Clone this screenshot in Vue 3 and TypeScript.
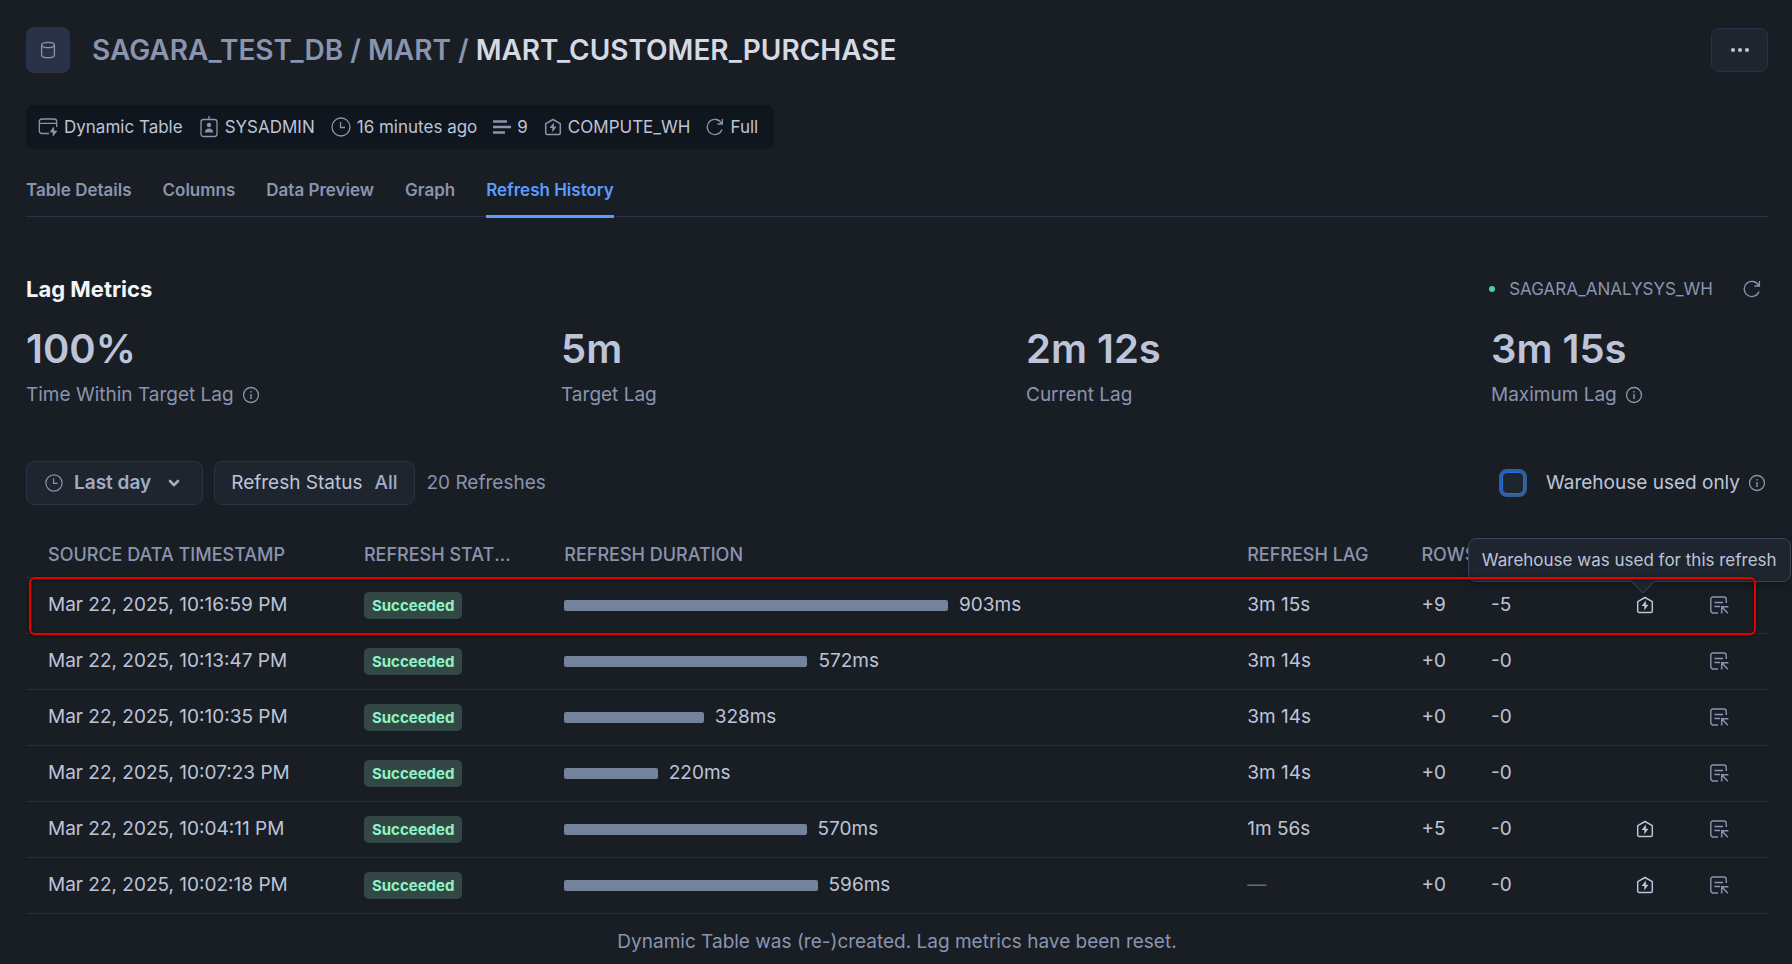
<script setup lang="ts">
interface Refresh {
  time: string
  ms: number
  lag: string | null
  added: number
  removed: number
  warehouse: boolean
}

const tabs: string[] = ['Table Details', 'Columns', 'Data Preview', 'Graph', 'Refresh History']
const activeTab = 'Refresh History'

const metrics: { value: string; label: string; info: boolean }[] = [
  { value: '100%', label: 'Time Within Target Lag', info: true },
  { value: '5m', label: 'Target Lag', info: false },
  { value: '2m 12s', label: 'Current Lag', info: false },
  { value: '3m 15s', label: 'Maximum Lag', info: true },
]

const refreshes: Refresh[] = [
  { time: 'Mar 22, 2025, 10:16:59 PM', ms: 903, lag: '3m 15s', added: 9, removed: 5, warehouse: true },
  { time: 'Mar 22, 2025, 10:13:47 PM', ms: 572, lag: '3m 14s', added: 0, removed: 0, warehouse: false },
  { time: 'Mar 22, 2025, 10:10:35 PM', ms: 328, lag: '3m 14s', added: 0, removed: 0, warehouse: false },
  { time: 'Mar 22, 2025, 10:07:23 PM', ms: 220, lag: '3m 14s', added: 0, removed: 0, warehouse: false },
  { time: 'Mar 22, 2025, 10:04:11 PM', ms: 570, lag: '1m 56s', added: 5, removed: 0, warehouse: true },
  { time: 'Mar 22, 2025, 10:02:18 PM', ms: 596, lag: null, added: 0, removed: 0, warehouse: true },
]

const longest = Math.max(...refreshes.map((r) => r.ms))
const barWidth = (ms: number): string => `${((ms / longest) * 56.2).toFixed(2)}%`
</script>

<template>
  <main class="page">
    <svg class="defs" aria-hidden="true">
      <symbol id="i-info" viewBox="0 0 18 18">
        <circle cx="9" cy="9" r="7.5" fill="none" stroke="currentColor" stroke-width="1.3" />
        <path d="M9 8v5M9 5v1.5" fill="none" stroke="currentColor" stroke-width="1.4" />
      </symbol>
      <symbol id="i-clock" viewBox="0 0 20 20">
        <circle cx="10" cy="10" r="9" fill="none" stroke="currentColor" stroke-width="1.3" />
        <path d="M9.5 5v5.5H14" fill="none" stroke="currentColor" stroke-width="1.3" />
      </symbol>
      <symbol id="i-refresh" viewBox="0 0 18 18">
        <path d="M16 11.5A7.6 7.6 0 1 1 15.6 5.5M16.4 1v5H11.4" fill="none" stroke="currentColor" stroke-width="1.3" />
      </symbol>
      <symbol id="i-warehouse" viewBox="0 0 18 18">
        <path d="M1.7 5.7 9 1.5l7.3 4.2v9.2q0 1.5-1.5 1.5H3.2q-1.5 0-1.5-1.5Z" fill="none" stroke="currentColor" stroke-width="1.5" stroke-linejoin="round" />
        <path d="M9.9 4.6 5.6 10h2.7v4.2l4.2-5.4H9.9Z" fill="currentColor" />
      </symbol>
      <symbol id="i-query" viewBox="0 0 20 20">
        <path d="M9 18H4.2Q1.8 18 1.8 15.6V4.4Q1.8 2 4.2 2h10.6q2.4 0 2.4 2.4V8M5.5 7.5H14M5.5 11.5H11" fill="none" stroke="currentColor" stroke-width="1.4" />
        <path d="M12.7 18.5v-6.7h6.7M12.9 12l6 6.2" fill="none" stroke="currentColor" stroke-width="1.5" />
      </symbol>
    </svg>

    <header class="head">
      <span class="object-icon">
        <svg width="18" height="20" viewBox="0 0 18 20" fill="none" stroke="currentColor" stroke-width="1.3">
          <ellipse cx="9" cy="5" rx="6.4" ry="2.7" />
          <path d="M2.6 5v10c0 1.6 2.6 2.7 6.4 2.7s6.4-1.1 6.4-2.7V5" />
        </svg>
      </span>
      <h1><a href="#">SAGARA_TEST_DB</a> / <a href="#">MART</a> / <strong>MART_CUSTOMER_PURCHASE</strong></h1>
      <button class="more" type="button" aria-label="More actions">
        <svg width="20" height="6" viewBox="0 0 20 6" fill="currentColor">
          <circle cx="3" cy="3" r="2.1" /><circle cx="10" cy="3" r="2.1" /><circle cx="17" cy="3" r="2.1" />
        </svg>
      </button>
    </header>

    <ul class="meta">
      <li>
        <svg width="20" height="20" viewBox="0 0 20 20" fill="none" stroke="currentColor" stroke-width="1.3">
          <path d="M11 16.5H4Q1.3 16.5 1.3 13.8V4.7Q1.3 2 4 2h12q2.7 0 2.7 2.7V10M1.3 6.3h17.4" />
          <path d="M15.8 9.5 11.7 15.3h3v4.4l4.800-6h-3.200Z" fill="currentColor" stroke="none" />
        </svg>
        Dynamic Table
      </li>
      <li>
        <svg width="20" height="22" viewBox="0 0 20 22" fill="none" stroke="currentColor" stroke-width="1.3">
          <rect x="2" y="3.5" width="16" height="17" rx="2.5" />
          <path d="M10 0v4" />
          <circle cx="10" cy="9" r="2.2" fill="currentColor" stroke="none" />
          <path d="M5.8 16.5c0-5.400 8.400-5.400 8.400 0Z" fill="currentColor" stroke="none" />
        </svg>
        SYSADMIN
      </li>
      <li><svg width="20" height="20"><use href="#i-clock" /></svg>16 minutes ago</li>
      <li>
        <svg width="18" height="16" viewBox="0 0 18 16" fill="none" stroke="currentColor" stroke-width="2.6">
          <path d="M0 2.5h14M0 8h18M0 13.5h12" />
        </svg>
        9
      </li>
      <li><svg width="18" height="18"><use href="#i-warehouse" /></svg>COMPUTE_WH</li>
      <li><svg width="18" height="18"><use href="#i-refresh" /></svg>Full</li>
    </ul>

    <nav class="tabs">
      <a v-for="tab in tabs" :key="tab" href="#" :class="{ active: tab === activeTab }">{{ tab }}</a>
    </nav>

    <section class="lag">
      <div class="lag-head">
        <h2>Lag Metrics</h2>
        <span class="wh"><i class="dot"></i>SAGARA_ANALYSYS_WH</span>
        <button class="icon-btn" type="button" aria-label="Refresh">
          <svg width="18" height="18"><use href="#i-refresh" /></svg>
        </button>
      </div>
      <dl class="metrics">
        <div v-for="m in metrics" :key="m.label">
          <dd>{{ m.value }}</dd>
          <dt>{{ m.label }}<svg v-if="m.info" width="18" height="18"><use href="#i-info" /></svg></dt>
        </div>
      </dl>
    </section>

    <div class="filters">
      <button class="btn" type="button">
        <svg width="18" height="18"><use href="#i-clock" /></svg>
        <b>Last day</b>
        <svg class="chev" width="12" height="12" viewBox="0 0 12 12" fill="none" stroke="currentColor" stroke-width="2.6" stroke-linecap="round" stroke-linejoin="round">
          <path d="M2 4 6 8.2 10 4" />
        </svg>
      </button>
      <button class="btn status" type="button">Refresh Status <span>All</span></button>
      <span class="count">20 Refreshes</span>
      <label class="only">
        <input type="checkbox" />
        Warehouse used only
        <svg width="18" height="18"><use href="#i-info" /></svg>
      </label>
    </div>

    <table>
      <colgroup>
        <col class="c-time" /><col class="c-status" /><col class="c-duration" /><col class="c-lag" />
        <col class="c-added" /><col class="c-removed" /><col class="c-wh" /><col class="c-query" />
      </colgroup>
      <thead>
        <tr>
          <th>SOURCE DATA TIMESTAMP</th>
          <th class="clipped">REFRESH STATUS</th>
          <th>REFRESH DURATION</th>
          <th>REFRESH LAG</th>
          <th colspan="2">ROWS</th>
          <th></th>
          <th></th>
        </tr>
      </thead>
      <tbody>
        <tr v-for="(r, i) in refreshes" :key="r.time" :class="{ marked: i === 0 }">
          <td>{{ r.time }}</td>
          <td><span class="badge">Succeeded</span></td>
          <td>
            <div class="duration"><i class="bar" :style="{ width: barWidth(r.ms) }"></i>{{ r.ms }}ms</div>
          </td>
          <td><template v-if="r.lag">{{ r.lag }}</template><span v-else class="none">—</span></td>
          <td>+{{ r.added }}</td>
          <td>-{{ r.removed }}</td>
          <td>
            <span v-if="r.warehouse" class="used">
              <svg width="18" height="18"><use href="#i-warehouse" /></svg>
              <span v-if="i === 0" class="tip" role="tooltip">
                Warehouse was used for this refresh
                <svg class="arrow" width="24" height="13" viewBox="0 0 24 13">
                  <path class="arrow-fill" d="M0 0 12 12 24 0Z" />
                  <path class="arrow-line" d="M0 0 12 12 24 0" />
                </svg>
              </span>
            </span>
          </td>
          <td>
            <button class="icon-btn" type="button" aria-label="Open query profile">
              <svg width="20" height="20"><use href="#i-query" /></svg>
            </button>
          </td>
        </tr>
      </tbody>
    </table>
    <p class="note">Dynamic Table was (re-)created. Lag metrics have been reset.</p>
  </main>
</template>

<style>
body {
  background: #191e25;
}
</style>

<style scoped>
* {
  box-sizing: border-box;
}
.page {
  padding: 27px 24px 0 26px;
  overflow: hidden;
  font: 19px/24px Inter, sans-serif;
  color: #bdc4d9;
}
.defs {
  position: absolute;
  width: 0;
  height: 0;
}
svg {
  flex: none;
  display: block;
}
a {
  color: inherit;
  text-decoration: none;
}
button {
  font: inherit;
  color: inherit;
  padding: 0;
  border: 0;
  background: none;
}
.head {
  display: flex;
  align-items: center;
  height: 46px;
}
.object-icon {
  display: grid;
  place-items: center;
  width: 44px;
  height: 46px;
  border-radius: 8px;
  background: #293246;
  color: #8a96ad;
}
h1 {
  margin: 0 auto 0 22px;
  font-size: 28px;
  line-height: 36px;
  font-weight: 600;
  color: #8a94ae;
}
h1 strong {
  font-weight: 600;
  color: #d5d9e4;
}
.more {
  display: grid;
  place-items: center;
  width: 57px;
  height: 44px;
  border: 1px solid #2a3246;
  border-radius: 8px;
  background: #1e252f;
}
.meta {
  display: flex;
  align-items: center;
  gap: 16px;
  width: max-content;
  height: 44px;
  margin: 32px 0 0;
  padding: 0 16px 0 12px;
  border-radius: 8px;
  background: #10161d;
  list-style: none;
  font-size: 17px;
}
.meta li {
  display: flex;
  align-items: center;
  gap: 6px;
}
.meta svg {
  color: #8a94ae;
}
.tabs {
  display: flex;
  gap: 31px;
  margin-top: 29px;
  border-bottom: 1px solid #2a3046;
  font-size: 17px;
  font-weight: 600;
  color: #8a94ae;
}
.tabs a {
  height: 40px;
  margin-bottom: -2px;
  border-bottom: 3px solid transparent;
}
.tabs .active {
  color: #5a9cff;
  border-color: #5a9cff;
}
.lag-head {
  display: flex;
  align-items: center;
  margin-top: 58px;
  height: 28px;
}
h2 {
  margin: 0 auto 0 0;
  font-size: 22px;
  line-height: 28px;
  font-weight: 700;
  color: #f4f5f8;
}
.wh {
  display: flex;
  align-items: center;
  gap: 14px;
  margin-right: 30px;
  font-size: 17px;
  color: #8a94ae;
}
.dot {
  width: 6px;
  height: 6px;
  border-radius: 50%;
  background: #54c8b4;
}
.icon-btn {
  display: block;
  color: #8a94ae;
}
.lag-head .icon-btn {
  margin-right: 7px;
}
.metrics {
  display: grid;
  grid-template-columns: 535fr 465fr 465fr 277fr;
  margin: 22px 0 0;
}
.metrics div {
  display: flex;
  flex-direction: column;
  gap: 10px;
}
dd {
  margin: 0;
  font-size: 40px;
  line-height: 48px;
  font-weight: 600;
}
dt {
  display: flex;
  align-items: center;
  gap: 8px;
  color: #8a94ae;
}
.filters {
  display: flex;
  align-items: center;
  margin-top: 54px;
}
.btn {
  display: flex;
  align-items: center;
  height: 44px;
  padding: 0 18px;
  border: 1px solid #2a3246;
  border-radius: 8px;
  background: #1e252f;
}
.btn svg {
  color: #8a94ae;
}
.btn b {
  font-weight: 600;
  color: #a3acc2;
  margin: 0 17px 0 11px;
}
.btn .chev {
  color: #a3acc2;
  margin-right: 4px;
}
.status {
  gap: 12px;
  margin: 0 12px 0 11px;
  padding: 0 16px;
}
.status span {
  font-weight: 500;
  color: #a3acc2;
}
.count {
  color: #8a94ae;
}
.only {
  display: flex;
  align-items: center;
  gap: 8px;
  margin: 0 2px 0 auto;
}
.only svg {
  color: #8a94ae;
}
.only input {
  appearance: none;
  width: 22px;
  height: 22px;
  margin: 0 14px 0 0;
  border: 1px solid #1e6ff0;
  border-radius: 5px;
  background: #1e252f;
  box-shadow: 0 0 0 3px #335f98;
}
table {
  width: 100%;
  margin-top: 28px;
  border-collapse: collapse;
  table-layout: fixed;
}
.c-time { width: 19.4%; }
.c-status { width: 11.5%; }
.c-lag { width: 10%; }
.c-added { width: 4%; }
.c-removed { width: 8.3%; }
.c-wh { width: 4.2%; }
.c-query { width: 3.4%; }
th, td {
  height: 56px;
  padding: 0;
  border-bottom: 1px solid #272e3b;
  text-align: left;
  vertical-align: middle;
}
th {
  height: 44px;
  font-size: 18px;
  font-weight: 500;
  color: #8a94ae;
  white-space: nowrap;
}
th:first-child, td:first-child {
  padding-left: 22px;
}
.clipped {
  padding-right: 52px;
  overflow: hidden;
  text-overflow: ellipsis;
}
.badge {
  display: block;
  width: max-content;
  padding: 0 8px;
  border-radius: 5px;
  background: #334845;
  color: #90f2c4;
  font-size: 15px;
  line-height: 27px;
  font-weight: 700;
}
.duration {
  display: flex;
  align-items: center;
  gap: 11px;
}
.bar {
  height: 11px;
  border-radius: 2px;
  background: #72839b;
}
.none {
  color: #5f6b82;
}
.used {
  display: block;
  position: relative;
  width: 18px;
}
.tip {
  position: absolute;
  right: -137px;
  bottom: 32px;
  width: max-content;
  padding: 9px 13px;
  border: 1px solid #3a455a;
  border-radius: 8px;
  background: #1e252f;
  box-shadow: 0 2px 12px rgb(0 0 0 / 30%);
  font-size: 17px;
}
.arrow {
  position: absolute;
  right: 135px;
  top: 100%;
}
.arrow-fill {
  fill: #1e252f;
}
.arrow-line {
  fill: none;
  stroke: #3a455a;
}
.marked {
  position: relative;
}
.marked td:first-child::after {
  content: '';
  position: absolute;
  z-index: 2;
  inset: 0 12px -2px 3px;
  border: 2px solid #e60000;
  border-radius: 6px;
  box-shadow: 0 1px 4px rgb(0 0 0 / 45%), inset 0 1px 4px rgb(0 0 0 / 45%);
  pointer-events: none;
}
.note {
  margin: 16px 0;
  text-align: center;
  color: #8a94ae;
}
</style>
